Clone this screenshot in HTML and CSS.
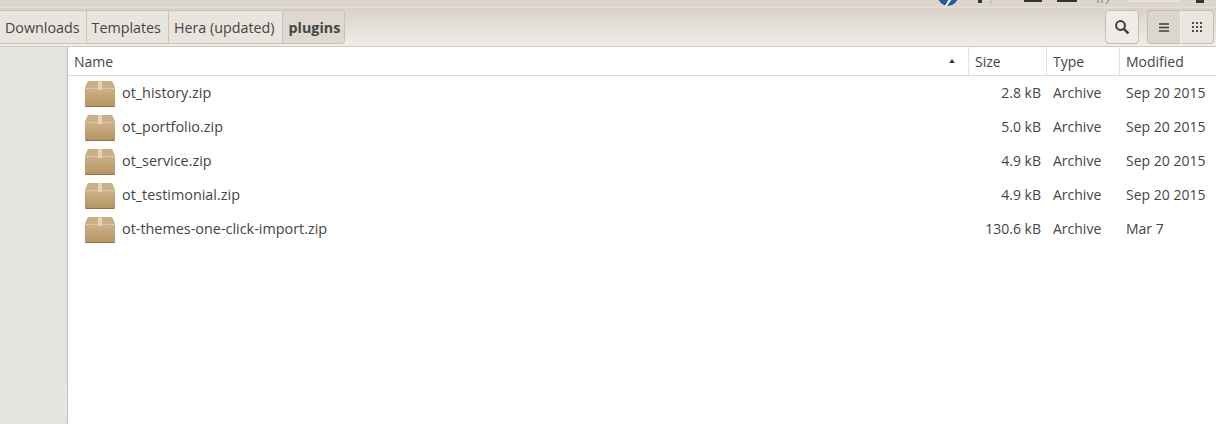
FILE: index.html
```html
<!DOCTYPE html>
<html lang="en">
<head>
    <meta charset="UTF-8">
    <title>plugins</title>
    <link rel="stylesheet" href="styles.css">
</head>
<body>
    <div class="top-strip">
        <svg width="286" height="7" viewBox="0 0 286 7">
            <circle cx="18" cy="-4" r="10" fill="#1c5f9e"/>
            <path d="M17 6l5-7h-3l-4 7z" fill="#fff"/>
            <rect x="48" y="0" width="4" height="3" fill="#333"/>
            <path d="M60 4l2-4" stroke="#b5aea4" stroke-width="1"/>
            <rect x="94" y="0" width="18" height="2" fill="#333"/>
            <rect x="127" y="0" width="20" height="2" fill="#333"/>
            <path d="M168 0v3M172 0v3M176 4l3-4" stroke="#777" stroke-width="1"/>
            <rect x="198" y="0" width="52" height="2" fill="#e9e2d6"/>
            <rect x="266" y="0" width="8" height="3" fill="#333"/>
        </svg>
    </div>
    <header class="toolbar">
        <nav class="crumbs">
            <button class="crumb">Downloads</button>
            <button class="crumb">Templates</button>
            <button class="crumb">Hera (updated)</button>
            <button class="crumb crumb-active">plugins</button>
        </nav>
        <div class="tools">
            <button class="tool tool-search">
                <svg width="16" height="16" viewBox="0 0 16 16">
                    <circle cx="6.5" cy="6.5" r="4.4" fill="none" stroke="#3c3c3c" stroke-width="2"/>
                    <path d="M9.8 9.8l4.6 4.6" stroke="#3c3c3c" stroke-width="2.4"/>
                </svg>
            </button>
            <div class="view-switch">
                <button class="tool tool-list">
                    <svg width="10" height="9" viewBox="0 0 10 9">
                        <path d="M0 1h10M0 4.500h10M0 8h10" stroke="#3c3c3c" stroke-width="1.600"/>
                    </svg>
                </button>
                <button class="tool tool-grid">
                    <svg width="10" height="10" viewBox="0 0 10 10" fill="#4a4a4a">
                        <rect width="2" height="2"/><rect x="4" width="2" height="2"/><rect x="8" width="2" height="2"/>
                        <rect y="4" width="2" height="2"/><rect x="4" y="4" width="2" height="2"/><rect x="8" y="4" width="2" height="2"/>
                        <rect y="8" width="2" height="2"/><rect x="4" y="8" width="2" height="2"/><rect x="8" y="8" width="2" height="2"/>
                    </svg>
                </button>
            </div>
        </div>
    </header>
    <main class="browser">
        <aside class="sidebar"><div class="grip"></div></aside>
        <section class="files">
            <div class="row head">
                <div class="col-name">Name<span class="sort"></span></div>
                <div class="col-size">Size</div>
                <div class="col-type">Type</div>
                <div class="col-date">Modified</div>
            </div>
            <div class="row item">
                <div class="col-name"><svg class="zip"><use href="#box"/></svg>ot_history.zip</div>
                <div class="col-size">2.8 kB</div>
                <div class="col-type">Archive</div>
                <div class="col-date">Sep 20 2015</div>
            </div>
            <div class="row item">
                <div class="col-name"><svg class="zip"><use href="#box"/></svg>ot_portfolio.zip</div>
                <div class="col-size">5.0 kB</div>
                <div class="col-type">Archive</div>
                <div class="col-date">Sep 20 2015</div>
            </div>
            <div class="row item">
                <div class="col-name"><svg class="zip"><use href="#box"/></svg>ot_service.zip</div>
                <div class="col-size">4.9 kB</div>
                <div class="col-type">Archive</div>
                <div class="col-date">Sep 20 2015</div>
            </div>
            <div class="row item">
                <div class="col-name"><svg class="zip"><use href="#box"/></svg>ot_testimonial.zip</div>
                <div class="col-size">4.9 kB</div>
                <div class="col-type">Archive</div>
                <div class="col-date">Sep 20 2015</div>
            </div>
            <div class="row item">
                <div class="col-name"><svg class="zip"><use href="#box"/></svg>ot-themes-one-click-import.zip</div>
                <div class="col-size">130.6 kB</div>
                <div class="col-type">Archive</div>
                <div class="col-date">Mar 7</div>
            </div>
        </section>
    </main>
    <svg width="0" height="0" class="defs">
        <defs>
            <linearGradient id="boxFill" x1="0" y1="0" x2="0" y2="1">
                <stop offset="0" stop-color="#d6bf99"/>
                <stop offset="1" stop-color="#b4935f"/>
            </linearGradient>
            <symbol id="box" viewBox="0 0 30 26">
                <path d="M3 0h24l3 7v17.500a1.500 1.500 0 0 1-1.500 1.500h-27a1.500 1.500 0 0 1-1.500-1.500v-17.500z" fill="url(#boxFill)"/>
                <path d="M3 0h24l3 7h-30z" fill="#c9b089"/>
                <path d="M0 7.500h30" stroke="#dcc7a4" stroke-width="1"/>
                <path d="M13 0h4v9h-4z" fill="#e3d4b9"/>
                <path d="M0.500 25h29v1h-29z" fill="#8f7246"/>
            </symbol>
        </defs>
    </svg>
</body>
</html>
```

FILE: styles.css
```css
body {
    margin: 0;
    height: 424px;
    overflow: hidden;
    display: flex;
    flex-direction: column;
    font-family: "Open Sans", "Noto Sans", sans-serif;
    font-size: 14px;
    color: #454545;
    background-color: #ffffff;
}

button {
    font: inherit;
    color: inherit;
}

.defs {
    position: absolute;
}

.top-strip {
    height: 8px;
    box-sizing: border-box;
    background-color: #dcd5cb;
    display: flex;
    justify-content: flex-end;
    border-bottom: 1px solid #e6e0d8;
}

.toolbar {
    height: 39px;
    box-sizing: border-box;
    display: flex;
    justify-content: space-between;
    padding-top: 2px;
    background: linear-gradient(#d9d2c8, #f0ede8);
    border-bottom: 1px solid #cfc9c0;
}

.crumbs {
    display: flex;
    height: 34px;
}

.crumb {
    height: 34px;
    padding: 0 6px 0 5px;
    font-size: 14.3px;
    background: #e9e4dd;
    border: 1px solid #c9c2b8;
    border-left: 0;
}

.crumb + .crumb {
    padding-right: 7px;
}

.crumb.crumb-active {
    padding: 0 4px 0 6px;
    font-weight: 700;
    background: #dfd8d0;
    border-radius: 0 4px 4px 0;
}

.tools {
    display: flex;
    gap: 8px;
    padding-right: 2px;
}

.tool {
    height: 34px;
    display: flex;
    align-items: center;
    justify-content: center;
    padding: 0;
    border: 1px solid #c4bdb3;
}

.tool-search {
    width: 34px;
    background: #efebe6;
    border-radius: 4px;
}

.view-switch {
    display: flex;
}

.tool-list {
    width: 34px;
    background: #ddd6cd;
    border-right-color: #f5f2ee;
    border-radius: 4px 0 0 4px;
}

.tool-grid {
    width: 33px;
    background: #e9e5df;
    border-left: 0;
    border-radius: 0 4px 4px 0;
}

.browser {
    flex: 1;
    display: flex;
    min-height: 0;
}

.sidebar {
    width: 67px;
    flex: none;
    background-color: #e6e4e1;
    border-right: 1px solid #bdbab6;
    position: relative;
}

.grip {
    position: absolute;
    right: 0;
    bottom: 8px;
    width: 1px;
    height: 31px;
    background: repeating-linear-gradient(#ffffff 0, #ffffff 1px, #e6e4e1 1px, #e6e4e1 5px);
}

.files {
    flex: 1;
}

.row {
    display: grid;
    grid-template-columns: 901px 78px 73px 1fr;
}

.head {
    height: 28px;
    align-items: center;
    border-bottom: 1px solid #dcdad7;
}

.head > div {
    height: 100%;
    display: flex;
    align-items: center;
    padding-left: 6px;
    box-sizing: border-box;
    border-right: 1px solid #e4e2df;
    position: relative;
}

.head .col-date {
    border-right: 0;
}

.sort {
    position: absolute;
    right: 13px;
    top: 12px;
    border-left: 3px solid transparent;
    border-right: 3px solid transparent;
    border-bottom: 4px solid #3c3c3c;
}

.item {
    height: 34px;
    box-sizing: border-box;
    padding-bottom: 2px;
    align-items: center;
}

.item .col-name {
    display: flex;
    align-items: center;
    padding-left: 17px;
    font-size: 14.4px;
}

.zip {
    width: 30px;
    height: 26px;
    margin-top: 4px;
    margin-right: 7px;
}

.item .col-size {
    text-align: right;
    padding-right: 6px;
}

.item .col-type,
.item .col-date {
    padding-left: 6px;
}
```
